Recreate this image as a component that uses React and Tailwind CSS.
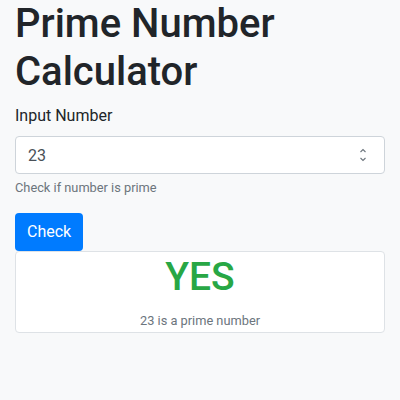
export default function App() {
  return (
    <div className="min-h-[400px] bg-[#f8f9fa] px-[15px] text-[#212529] font-['Roboto',sans-serif]">
      <h1 className="mb-2 text-[40px] font-medium leading-[1.2]">Prime Number Calculator</h1>

      <div className="mb-4">
        <label className="mb-2 block text-base leading-6">Input Number</label>
        <div className="relative">
          <input
            type="text"
            defaultValue="23"
            className="block h-[38px] w-full rounded border border-[#ced4da] bg-white px-3 text-base text-[#495057] outline-none"
          />
          <svg className="absolute right-[18px] top-[12px]" width="8" height="14" viewBox="0 0 8 14" fill="none" stroke="#6c757d" strokeWidth="1.1">
            <path d="M1.5 4 L4 1.5 L6.5 4" />
            <path d="M1.5 10 L4 12.5 L6.5 10" />
          </svg>
        </div>
        <small className="mt-1 block text-[12.8px] leading-[1.5] text-[#6c757d]">Check if number is prime</small>
      </div>

      <button className="h-[38px] rounded bg-[#007bff] px-3 text-base text-white">Check</button>

      <div className="rounded border border-[#dee2e6] bg-white pt-px pb-[2px] text-center">
        <div className="mb-[10px] text-[39px] font-medium leading-[48px] text-[#28a745]">YES</div>
        <p className="text-[12.8px] leading-[1.5] text-[#6c757d]">23 is a prime number</p>
      </div>
    </div>
  );
}
